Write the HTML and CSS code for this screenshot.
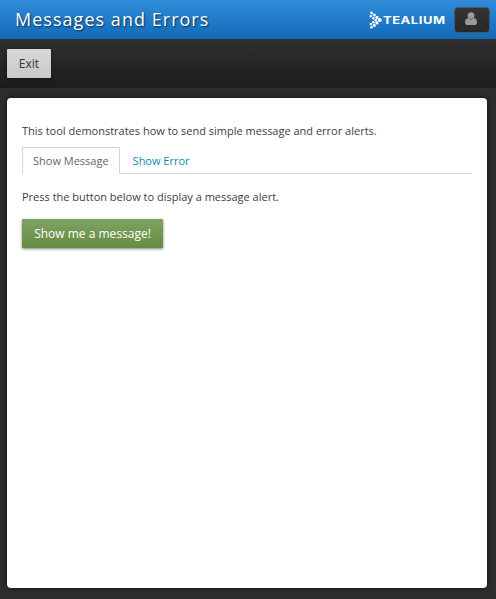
FILE: index.html
```html
<!DOCTYPE html>
<html lang="en">
<head>
<meta charset="utf-8">
<title>Messages and Errors</title>
<link rel="stylesheet" href="styles.css">
</head>
<body>
<header class="header">
  <h1 class="title">Messages and Errors</h1>
  <div class="brand">
    <svg class="mark" width="13" height="18" viewBox="0 0 13 18" fill="#fff">
      <circle cx="2.5" cy="1.9" r="1.3"/><circle cx="5.3" cy="4" r="1.6"/><circle cx="1.8" cy="5.3" r="1.2"/>
      <circle cx="8" cy="6.4" r="1.6"/><circle cx="4.4" cy="7.2" r="1.2"/><circle cx="10.7" cy="9.1" r="2"/>
      <circle cx="6.8" cy="9.2" r="1.2"/><circle cx="8" cy="11.9" r="1.6"/><circle cx="4.4" cy="11.2" r="1.2"/>
      <circle cx="5.3" cy="14.3" r="1.6"/><circle cx="1.8" cy="13" r="1.2"/><circle cx="2.5" cy="16.3" r="1.3"/>
    </svg>
    <span class="wordmark">TEALIUM</span>
  </div>
  <button class="user" aria-label="Account">
    <svg width="12" height="13" viewBox="0 0 12 13" fill="#999"><circle cx="6" cy="3.6" r="3.4"/><path d="M3 6Q0 6.3 0 10.6Q0 13 2 13H10Q12 13 12 10.6Q12 6.3 9 6Q6 8.8 3 6Z"/></svg>
  </button>
</header>
<nav class="toolbar"><button class="exit">Exit</button></nav>
<main class="panel">
  <p class="text">This tool demonstrates how to send simple message and error alerts.</p>
  <div class="tabs"><a class="tab active">Show Message</a><a class="tab">Show Error</a></div>
  <p class="text">Press the button below to display a message alert.</p>
  <button class="primary">Show me a message!</button>
</main>
</body>
</html>
```
FILE: styles.css
```css
* { box-sizing: border-box; }
body {
  margin: 0;
  height: 599px;
  display: flex;
  flex-direction: column;
  overflow: hidden;
  background: #2d2d2d;
  color: #404040;
  font: 11px/18px "Open Sans", "Noto Sans", sans-serif;
}
button { font-family: inherit; border: 0; padding: 0; white-space: nowrap; }
.header {
  flex: none;
  height: 39px;
  display: flex;
  align-items: center;
  padding: 0 6px 0 15px;
  background: linear-gradient(#318cdb, #116bb7);
}
.title {
  flex: 1;
  margin: 0;
  color: #fff;
  font-size: 18px;
  font-weight: 400;
  line-height: 39px;
  letter-spacing: 1.03px;
  text-shadow: 1px 1px 2px rgba(0, 0, 0, .65);
}
.brand { display: flex; align-items: center; width: 85px; }
.mark { flex: none; }
.wordmark {
  margin: 1px 0 0 1px;
  color: #fff;
  font: 700 10px/18px "Inter", sans-serif;
  letter-spacing: .4px;
  transform: scaleX(1.3);
  transform-origin: left;
}
.user {
  width: 36px;
  height: 26px;
  display: flex;
  align-items: center;
  justify-content: center;
  border: 1px solid #47586a;
  border-radius: 4px;
  background: linear-gradient(#333, #292929);
}
.user svg { margin: 0 2px 2px 0; }
.toolbar {
  flex: none;
  height: 49px;
  padding: 10px 7px;
  background: linear-gradient(#303030, #1c1c1c);
}
.exit {
  width: 44px;
  height: 29px;
  border-radius: 1px;
  background: linear-gradient(#d7d7d7, #c9c9c9);
  color: #333;
  font-size: 12px;
  box-shadow: 0 1px 4px rgba(0, 0, 0, .4);
}
.panel {
  width: 480px;
  height: 490px;
  margin: 10px 0 0 7px;
  padding: 24px 15px;
  border-radius: 4px;
  background: #fff;
  box-shadow: 0 0 5px rgba(0, 0, 0, .6);
}
.text { margin: 0; }
.tabs {
  display: flex;
  height: 27px;
  margin: 7px 0 14px;
  border-bottom: 1px solid #ddd;
}
.tab {
  height: 27px;
  margin-right: 2px;
  padding: 4px 10px;
  border: 1px solid transparent;
  border-bottom: 0;
  color: #1683b4;
}
.tab.active { border-color: #d5d5d5; background: #fff; color: #666; }
.primary {
  width: 141px;
  height: 29px;
  margin-top: 13px;
  border-radius: 1px;
  background: linear-gradient(#7fa262, #658d40);
  color: #fff;
  font-size: 12px;
  box-shadow: 0 1px 3px rgba(0, 0, 0, .5);
}
```
